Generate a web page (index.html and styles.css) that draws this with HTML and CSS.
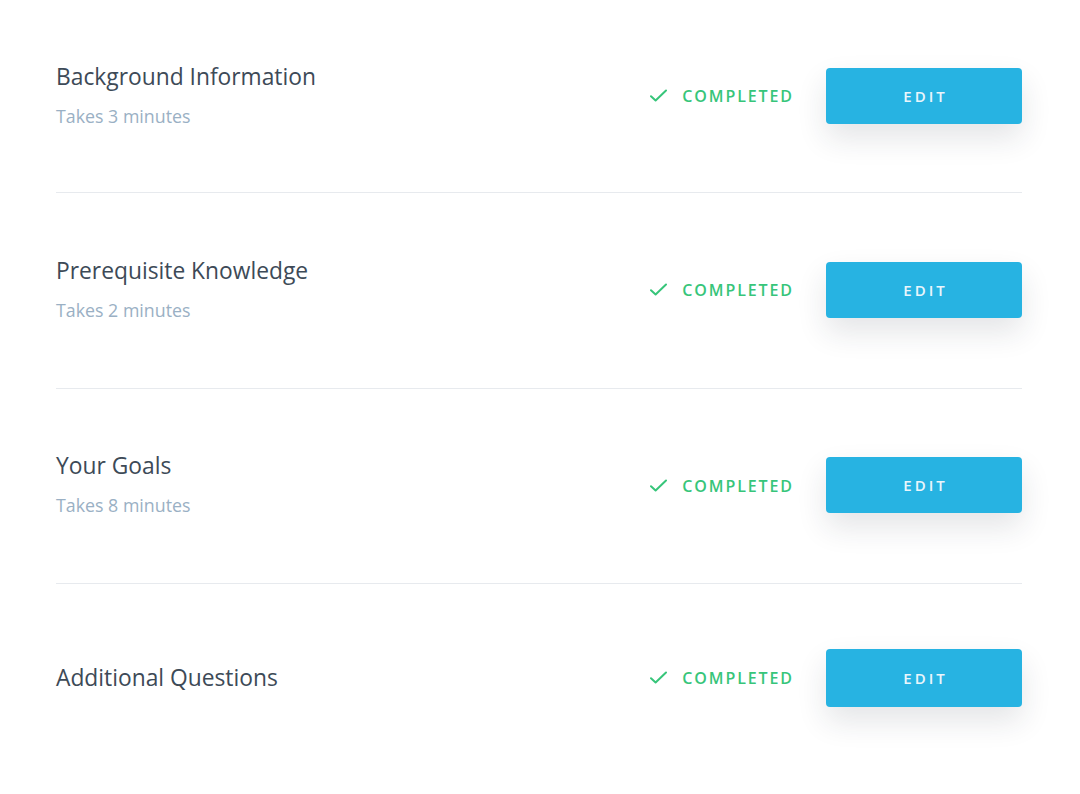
FILE: index.html
```html
<!DOCTYPE html>
<html lang="en">
<head>
<meta charset="utf-8">
<title>Steps</title>
<link rel="stylesheet" href="styles.css">
</head>
<body>
<ul class="steps">
  <li class="step step--first">
    <div class="step__info">
      <div class="step__title">Background Information</div>
      <div class="step__meta">Takes 3 minutes</div>
    </div>
    <div class="step__status">
      <svg class="check" width="18" height="14" viewBox="0 0 18 14"><path d="M1 7.2 L5.6 11.5 L16 1.5" fill="none" stroke="#37c57a" stroke-width="2" stroke-linecap="round" stroke-linejoin="round"/></svg>
      <span>COMPLETED</span>
    </div>
    <button class="btn">EDIT</button>
  </li>
  <li class="step">
    <div class="step__info">
      <div class="step__title">Prerequisite Knowledge</div>
      <div class="step__meta">Takes 2 minutes</div>
    </div>
    <div class="step__status">
      <svg class="check" width="18" height="14" viewBox="0 0 18 14"><path d="M1 7.2 L5.6 11.5 L16 1.5" fill="none" stroke="#37c57a" stroke-width="2" stroke-linecap="round" stroke-linejoin="round"/></svg>
      <span>COMPLETED</span>
    </div>
    <button class="btn">EDIT</button>
  </li>
  <li class="step">
    <div class="step__info">
      <div class="step__title">Your Goals</div>
      <div class="step__meta">Takes 8 minutes</div>
    </div>
    <div class="step__status">
      <svg class="check" width="18" height="14" viewBox="0 0 18 14"><path d="M1 7.2 L5.6 11.5 L16 1.5" fill="none" stroke="#37c57a" stroke-width="2" stroke-linecap="round" stroke-linejoin="round"/></svg>
      <span>COMPLETED</span>
    </div>
    <button class="btn">EDIT</button>
  </li>
  <li class="step step--last">
    <div class="step__info">
      <div class="step__title">Additional Questions</div>
    </div>
    <div class="step__status">
      <svg class="check" width="18" height="14" viewBox="0 0 18 14"><path d="M1 7.2 L5.6 11.5 L16 1.5" fill="none" stroke="#37c57a" stroke-width="2" stroke-linecap="round" stroke-linejoin="round"/></svg>
      <span>COMPLETED</span>
    </div>
    <button class="btn btn--tall">EDIT</button>
  </li>
</ul>
</body>
</html>
```

FILE: styles.css
```css
* { box-sizing: border-box; }

html, body {
  margin: 0;
  padding: 0;
  background: #ffffff;
  font-family: "Open Sans", "Noto Sans", sans-serif;
}

.steps {
  list-style: none;
  margin: 0;
  padding: 0 58px 0 56px;
}

.step {
  display: flex;
  align-items: center;
  height: 195.5px;
  border-bottom: 1px solid #e7eaee;
}

.step--first { height: 193px; }

.step--last {
  height: 188px;
  border-bottom: none;
}

.step__info {
  flex: 1;
  display: flex;
  flex-direction: column;
  gap: 16px;
  margin-top: -3px;
}

.step--last .step__info { margin-top: 0; }

.step__title {
  font-size: 22.8px;
  line-height: 26px;
  color: #3d4a57;
}

.step__meta {
  font-size: 17.8px;
  line-height: 20px;
  color: #9ab0c4;
}

.step__status {
  display: flex;
  align-items: center;
  gap: 14px;
  margin-right: 32px;
  color: #37c57a;
  font-size: 16px;
  font-weight: 600;
  letter-spacing: 1.9px;
}

.check { display: block; }

.btn {
  width: 196px;
  height: 56px;
  margin-top: -1px;
  border: none;
  border-radius: 4px;
  background: #27b3e2;
  color: #eaf6fc;
  font-family: "Open Sans", "Noto Sans", sans-serif;
  font-size: 15px;
  font-weight: 600;
  letter-spacing: 3px;
  padding: 0 0 0 3px;
  box-shadow: 0 14px 30px rgba(30, 40, 60, 0.12);
}

.btn--tall { height: 58px; }
```
